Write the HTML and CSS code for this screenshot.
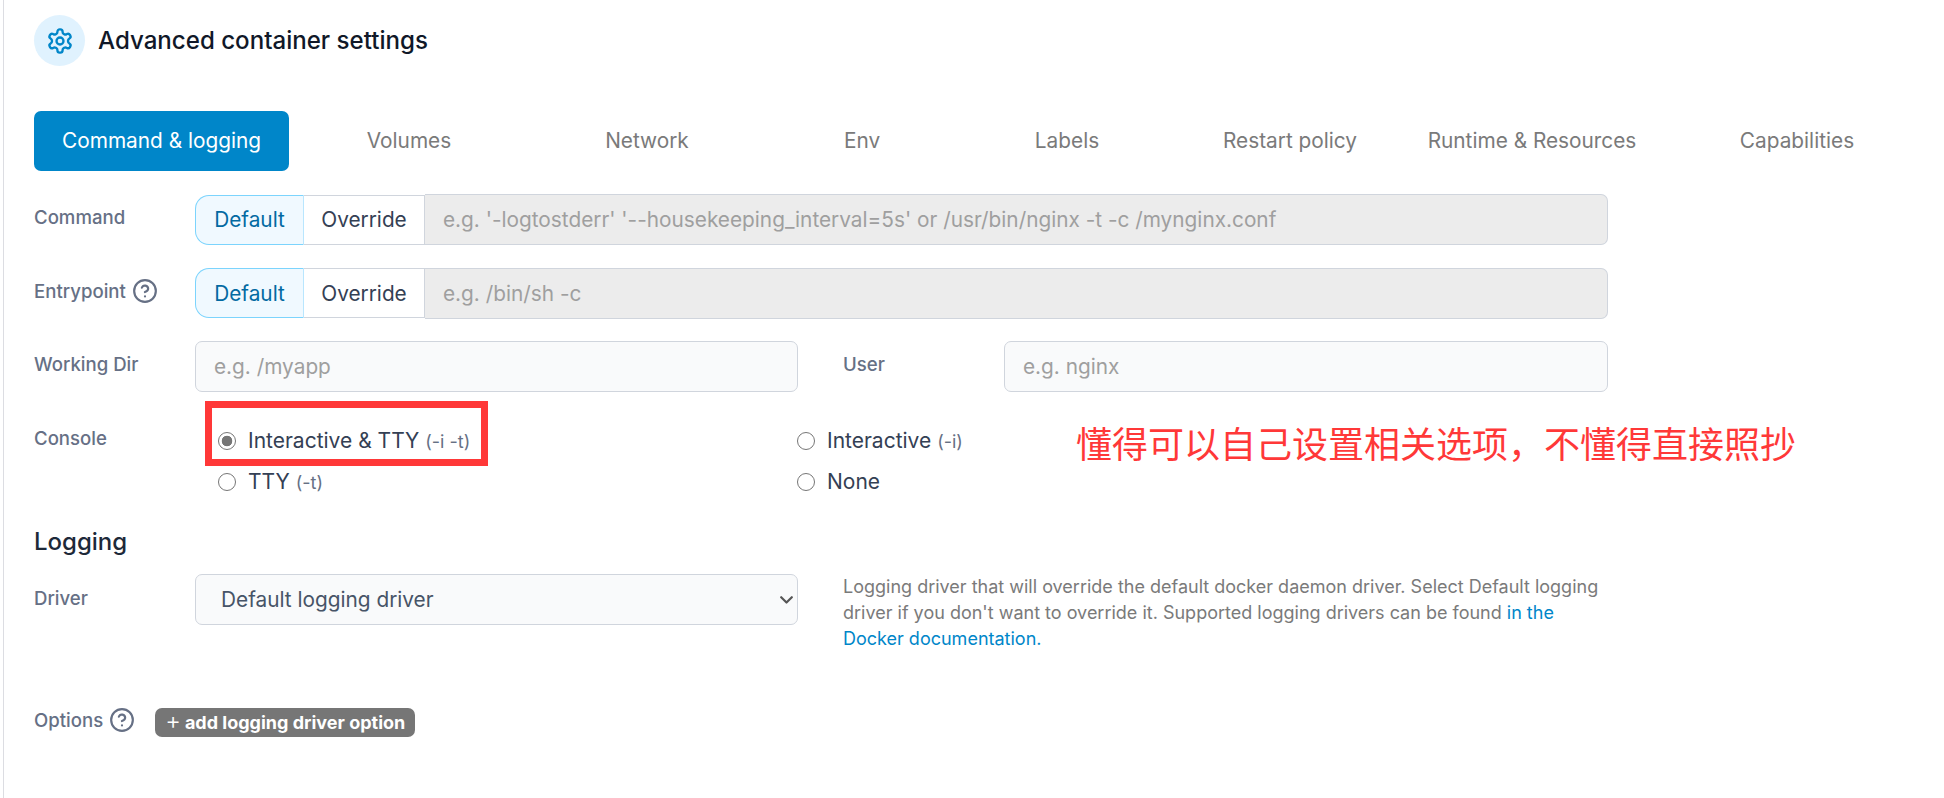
FILE: index.html
```html
<!DOCTYPE html>
<html lang="en">
<head>
  <meta charset="UTF-8" />
  <title>Advanced container settings</title>
  <link rel="stylesheet" href="styles.css">
</head>
<body>
  <div class="panel">
    <div class="header">
      <span class="header-icon">
        <svg viewBox="0 0 24 24" width="28" height="28" fill="none" stroke="currentColor" stroke-width="2" stroke-linecap="round" stroke-linejoin="round">
          <path d="M12.22 2h-.44a2 2 0 0 0-2 2v.18a2 2 0 0 1-1 1.73l-.43.25a2 2 0 0 1-2 0l-.15-.08a2 2 0 0 0-2.73.73l-.22.38a2 2 0 0 0 .73 2.73l.15.1a2 2 0 0 1 1 1.72v.51a2 2 0 0 1-1 1.74l-.15.09a2 2 0 0 0-.73 2.73l.22.38a2 2 0 0 0 2.73.73l.15-.08a2 2 0 0 1 2 0l.43.25a2 2 0 0 1 1 1.73V20a2 2 0 0 0 2 2h.44a2 2 0 0 0 2-2v-.18a2 2 0 0 1 1-1.73l.43-.25a2 2 0 0 1 2 0l.15.08a2 2 0 0 0 2.73-.73l.22-.39a2 2 0 0 0-.73-2.73l-.15-.08a2 2 0 0 1-1-1.74v-.5a2 2 0 0 1 1-1.74l.15-.09a2 2 0 0 0 .73-2.73l-.22-.38a2 2 0 0 0-2.73-.73l-.15.08a2 2 0 0 1-2 0l-.43-.25a2 2 0 0 1-1-1.73V4a2 2 0 0 0-2-2z"/>
          <circle cx="12" cy="12" r="3"/>
        </svg>
      </span>
      <h1>Advanced container settings</h1>
    </div>

    <div class="tabs">
      <a class="tab active">Command &amp; logging</a>
      <a class="tab">Volumes</a>
      <a class="tab">Network</a>
      <a class="tab">Env</a>
      <a class="tab">Labels</a>
      <a class="tab">Restart policy</a>
      <a class="tab">Runtime &amp; Resources</a>
      <a class="tab">Capabilities</a>
    </div>

    <form class="form">
      <div class="row">
        <label class="row-label">Command</label>
        <div class="toggle">
          <button type="button" class="toggle-btn selected">Default</button>
          <button type="button" class="toggle-btn">Override</button>
        </div>
        <input class="text-input toggle-input" type="text" disabled placeholder="e.g. '-logtostderr' '--housekeeping_interval=5s' or /usr/bin/nginx -t -c /mynginx.conf">
      </div>

      <div class="row">
        <label class="row-label">Entrypoint
          <svg class="help" viewBox="0 0 24 24" fill="none" stroke="currentColor" stroke-width="2" stroke-linecap="round" stroke-linejoin="round"><circle cx="12" cy="12" r="10"/><path d="M9.09 9a3 3 0 0 1 5.83 1c0 2-3 3-3 3"/><path d="M12 17h.01"/></svg>
        </label>
        <div class="toggle">
          <button type="button" class="toggle-btn selected">Default</button>
          <button type="button" class="toggle-btn">Override</button>
        </div>
        <input class="text-input toggle-input" type="text" disabled placeholder="e.g. /bin/sh -c">
      </div>

      <div class="row">
        <label class="row-label">Working Dir</label>
        <input class="text-input half" type="text" placeholder="e.g. /myapp">
        <label class="row-label user-label">User</label>
        <input class="text-input user-input" type="text" placeholder="e.g. nginx">
      </div>

      <div class="console">
        <label class="row-label console-label">Console</label>
        <div class="radios">
          <label class="radio"><input type="radio" name="console" checked><span>Interactive &amp; TTY <small>(-i -t)</small></span></label>
          <label class="radio"><input type="radio" name="console"><span>Interactive <small>(-i)</small></span></label>
          <label class="radio"><input type="radio" name="console"><span>TTY <small>(-t)</small></span></label>
          <label class="radio"><input type="radio" name="console"><span>None</span></label>
        </div>
      </div>

      <h2 class="section-title">Logging</h2>

      <div class="driver">
        <label class="row-label driver-label">Driver</label>
        <div class="select-wrap half">
          <select class="select">
            <option>Default logging driver</option>
          </select>
          <svg class="select-arrow" viewBox="0 0 13 8" fill="none" stroke="currentColor" stroke-width="2.2" stroke-linecap="round" stroke-linejoin="round"><path d="M1.2 1.2 6.5 6.5 11.8 1.2"/></svg>
        </div>
        <p class="driver-help">Logging driver that will override the default docker daemon driver. Select Default logging driver if you don't want to override it. Supported logging drivers can be found <a href="#">in the Docker documentation.</a></p>
      </div>

      <div class="options">
        <label class="row-label options-label">Options
          <svg class="help" viewBox="0 0 24 24" fill="none" stroke="currentColor" stroke-width="2" stroke-linecap="round" stroke-linejoin="round"><circle cx="12" cy="12" r="10"/><path d="M9.09 9a3 3 0 0 1 5.83 1c0 2-3 3-3 3"/><path d="M12 17h.01"/></svg>
        </label>
        <button type="button" class="badge-btn"><span class="plus">+</span><span>add logging driver option</span></button>
      </div>
    </form>

    <!-- annotations drawn over the screenshot -->
    <div class="mark-box"></div>
    <div class="mark-text">懂得可以自己设置相关选项&#xFF0C;不懂得直接照抄</div>
  </div>
</body>
</html>
```

FILE: styles.css
```css
* {
  box-sizing: border-box;
}
html, body {
  height: 100%;
}
body {
  margin: 0;
  padding-left: 3px;
  background: #fff;
  font-family: Inter, "Noto Sans CJK SC", sans-serif;
  font-size: 18px;
  color: #344054;
  overflow: hidden;
}
.panel {
  position: relative;
  height: 100%;
  border-left: 1px solid #dcdde2;
  padding: 15px 0 0 30px;
}

/* header */
.header {
  display: flex;
  align-items: center;
  gap: 13px;
  height: 51px;
}
.header-icon {
  width: 51px;
  height: 51px;
  border-radius: 50%;
  background: #e0f2fe;
  color: #0086c9;
  display: flex;
  align-items: center;
  justify-content: center;
}
h1 {
  margin: 0;
  font-size: 24.1px;
  font-weight: 500;
  color: #101828;
}

/* tabs */
.tabs {
  display: grid;
  grid-template-columns: 255px 240px 236px 194px 216px 230px 254px 276px;
  margin-top: 45px;
  height: 60px;
}
.tab {
  display: flex;
  align-items: center;
  justify-content: center;
  padding-bottom: 1px;
  color: #7a7a7a;
  font-size: 20.8px;
}
.tab.active {
  background: #0086c9;
  color: #fff;
  border-radius: 7px;
}

/* form rows */
.form {
  margin-top: 23px;
}
.row {
  display: flex;
  align-items: center;
  height: 51px;
  margin-bottom: 22.5px;
}
.row-label {
  width: 161px;
  flex: none;
  display: flex;
  align-items: center;
  gap: 6px;
  padding-bottom: 5px;
  font-size: 18.6px;
  font-weight: 500;
  color: #667085;
}
.help {
  color: #667085;
  width: 26px;
  height: 26px;
}
.toggle {
  display: flex;
  height: 50px;
  flex: none;
}
.toggle-btn {
  font: inherit;
  font-size: 20.8px;
  background: #fff;
  color: #344054;
  border: 1px solid #d0d5dd;
  border-left: none;
  width: 121px;
  padding: 0;
}
.toggle-btn.selected {
  width: 109px;
  background: #f0f9ff;
  color: #026aa2;
  border: 1px solid #7cd4fd;
  border-right-color: #b9e6fe;
  border-radius: 14px 0 0 14px;
}
.text-input {
  font: inherit;
  font-size: 20.8px;
  height: 51px;
  padding: 0 18px;
  border: 1px solid #d0d5dd;
  border-radius: 7px;
  background: #f9fafb;
  color: #344054;
}
.text-input::placeholder {
  color: #9f9f9f;
}
.text-input:disabled {
  background: #ececec;
  border-radius: 0 7px 7px 0;
  border-left: none;
}
.toggle-input {
  width: 1183px;
}
.half {
  width: 603px;
  flex: none;
}
.user-label {
  margin-left: 45px;
}
.user-input {
  width: 604px;
}

/* console radios */
.console {
  display: flex;
  margin-top: 28px;
}
.console-label {
  height: 41px;
}
.radios {
  display: grid;
  grid-template-columns: 579px 1fr;
  grid-auto-rows: 41px;
  margin-left: 23px;
}
.radio {
  display: flex;
  align-items: center;
  gap: 12px;
  font-size: 21px;
  color: #344054;
}
.radio small {
  font-size: 18px;
  color: #667085;
}
.radio input {
  appearance: none;
  flex: none;
  width: 18px;
  height: 18px;
  margin: 0;
  border: 1.5px solid #767676;
  border-radius: 50%;
  background: #fff;
}
.radio input:checked {
  background: radial-gradient(circle, #767676 0 5px, #fff 5.6px);
}

/* logging */
.section-title {
  margin: 25px 0 17px;
  height: 30px;
  line-height: 30px;
  font-size: 24px;
  font-weight: 500;
  color: #1d2939;
}
.driver {
  display: flex;
  align-items: flex-start;
  height: 78px;
}
.driver-label {
  height: 51px;
  padding-bottom: 3px;
}
.select-wrap {
  position: relative;
}
.select {
  appearance: none;
  display: block;
  width: 100%;
  font: inherit;
  font-size: 20.8px;
  height: 51px;
  padding: 0 30px 0 25px;
  border: 1px solid #d0d5dd;
  border-radius: 7px;
  background: #f9fafb;
  color: #475467;
}
.select-arrow {
  position: absolute;
  right: 5px;
  top: 22px;
  width: 13px;
  height: 8px;
  color: #555;
}
.driver-help {
  margin: 0 0 0 45px;
  width: 765px;
  font-size: 18px;
  line-height: 26px;
  color: #7a7a7a;
}
.driver-help a {
  color: #0086c9;
  text-decoration: none;
}
.options {
  display: flex;
  align-items: center;
  margin-top: 55px;
}
.options-label {
  width: auto;
}
.badge-btn {
  font: inherit;
  font-size: 18px;
  font-weight: 700;
  display: flex;
  align-items: center;
  gap: 4px;
  height: 29px;
  width: 260px;
  margin-left: 20px;
  padding: 0 0 0 10px;
  border: none;
  border-radius: 7px;
  background: #767676;
  color: #fff;
}
.plus {
  font-size: 24px;
  font-weight: 300;
  line-height: 22px;
  margin-top: -3px;
}

/* red annotations */
.mark-box {
  position: absolute;
  left: 201px;
  top: 401px;
  width: 283px;
  height: 65px;
  border: 7px solid #ff3838;
}
.mark-text {
  position: absolute;
  left: 1072px;
  top: 419px;
  font-family: "Noto Sans CJK SC", sans-serif;
  font-size: 36px;
  line-height: 46px;
  color: #ff3838;
  white-space: nowrap;
}
```
